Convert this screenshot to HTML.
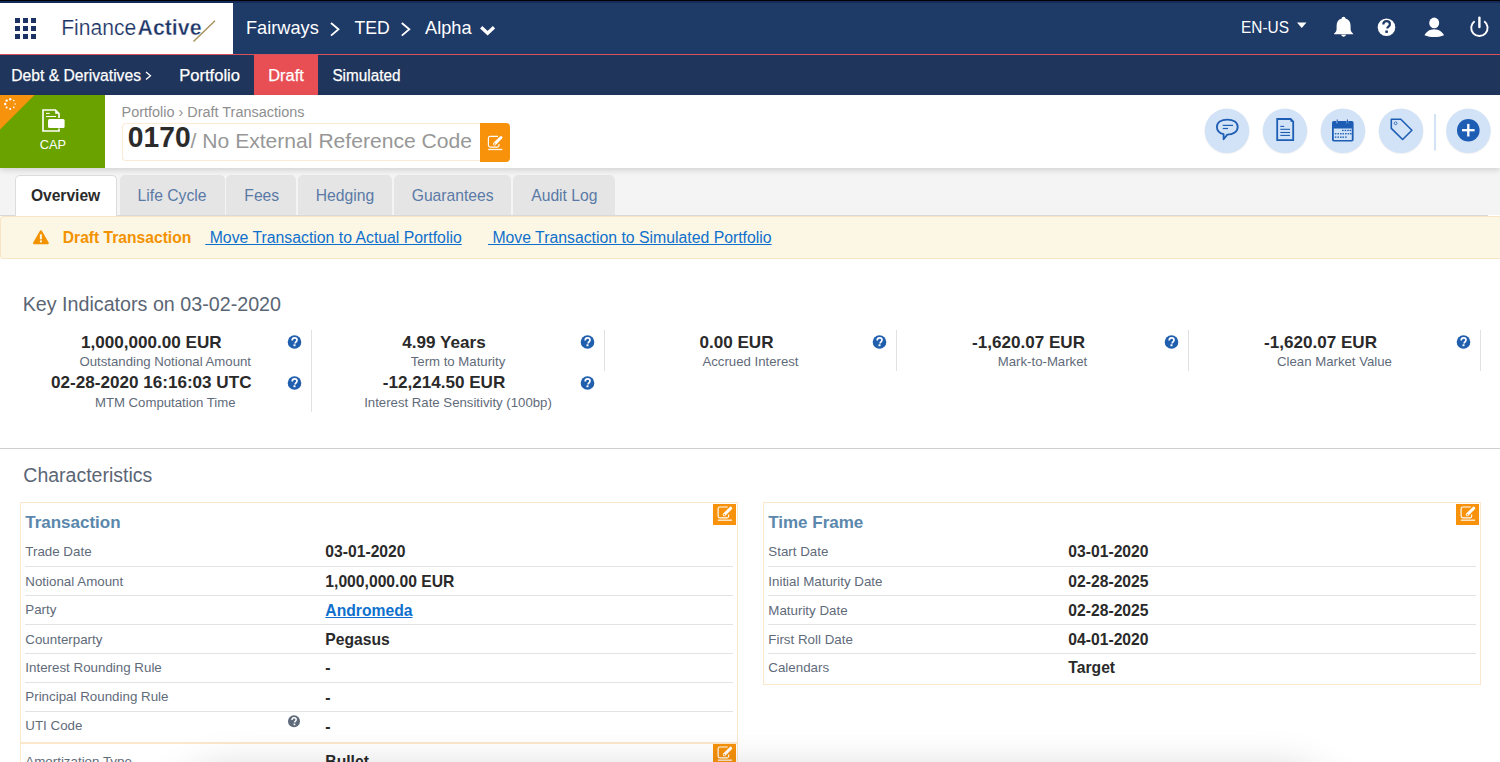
<!DOCTYPE html>
<html><head><meta charset="utf-8">
<style>
html,body{margin:0;padding:0;}
body{width:1500px;height:762px;overflow:hidden;position:relative;background:#fff;font-family:"Liberation Sans",sans-serif;}
.a{position:absolute;}
.t{position:absolute;white-space:nowrap;line-height:1;}
.b{font-weight:bold;}
svg{position:absolute;overflow:visible;}
</style></head>
<body>

<div class="a" style="left:0px;top:0px;width:1500px;height:1px;background:#000;"></div>
<div class="a" style="left:0px;top:1px;width:1500px;height:2px;background:#132a5a;"></div>
<div class="a" style="left:0px;top:3px;width:233px;height:51px;background:#fff;"></div>
<div class="a" style="left:233px;top:3px;width:1267px;height:51px;background:#1e3a67;"></div>
<div class="a" style="left:0px;top:54px;width:1500px;height:1px;background:#d9515a;"></div>
<svg style="left:0;top:0" width="1" height="1"><g fill="#1b3263"><rect x="15" y="18" width="5" height="5"/><rect x="23" y="18" width="5" height="5"/><rect x="31" y="18" width="5" height="5"/><rect x="15" y="26" width="5" height="5"/><rect x="23" y="26" width="5" height="5"/><rect x="31" y="26" width="5" height="5"/><rect x="15" y="34" width="5" height="5"/><rect x="23" y="34" width="5" height="5"/><rect x="31" y="34" width="5" height="5"/></g></svg>
<svg style="left:0;top:0" width="1" height="1"><text x="61.2" y="34.7" font-family="Liberation Sans" font-size="21.6" fill="#1d3566" stroke="#fff" stroke-width="0.2" textLength="75" lengthAdjust="spacingAndGlyphs">Finance</text><text x="137.5" y="34.7" font-family="Liberation Sans" font-weight="bold" font-size="21.6" fill="#1d3566" stroke="#fff" stroke-width="0.35" textLength="64" lengthAdjust="spacingAndGlyphs">Active</text><line x1="193.5" y1="41.5" x2="215" y2="20.8" stroke="#a8925e" stroke-width="1.5"/></svg>
<div class="t" style="left:246.00px;top:19.49px;font-size:18.2px;color:#fff;">Fairways</div>
<div class="t" style="left:354.60px;top:20.00px;font-size:17.6px;color:#fff;">TED</div>
<div class="t" style="left:425.00px;top:19.49px;font-size:18.2px;color:#fff;">Alpha</div>
<svg style="left:0;top:0" width="1" height="1"><polyline points="331,23 338.5,29.3 331,35.6" fill="none" stroke="#fff" stroke-width="1.8"/><polyline points="401.8,23 409.3,29.3 401.8,35.6" fill="none" stroke="#fff" stroke-width="1.8"/><polyline points="481.2,27.3 487.6,33.3 494,27.3" fill="none" stroke="#fff" stroke-width="3.3"/></svg>
<svg style="left:0;top:0" width="1" height="1"><text x="1241" y="32.6" font-family="Liberation Sans" font-size="16.6" fill="#fff" textLength="48" lengthAdjust="spacingAndGlyphs">EN-US</text></svg>
<svg style="left:0;top:0" width="1" height="1"><polygon points="1297,22.5 1306.5,22.5 1301.75,28" fill="#fff"/><path d="M1343.6,16.8 c-1.2,0 -1.8,0.9 -1.9,1.6 c-3.4,0.9 -5.1,3.6 -5.1,7.3 l0,3.6 c0,1.8 -1.2,3.3 -2.6,4.4 l0,0.6 l19.2,0 l0,-0.6 c-1.4,-1.1 -2.6,-2.6 -2.6,-4.4 l0,-3.6 c0,-3.7 -1.7,-6.4 -5.1,-7.3 c-0.1,-0.7 -0.7,-1.6 -1.9,-1.6 z M1341.2,34.8 c0.2,1.1 1.2,1.9 2.4,1.9 c1.2,0 2.2,-0.8 2.4,-1.9 z" fill="#fff"/><circle cx="1386.5" cy="27.3" r="8.8" fill="#fff"/><path d="M1383.3,24.6 c0,-2 1.5,-3.4 3.3,-3.4 c1.9,0 3.3,1.3 3.3,3 c0,2.4 -2.6,2.5 -2.6,4.4" fill="none" stroke="#1e3a67" stroke-width="2.2"/><rect x="1385.3" y="30.5" width="2.6" height="2.4" fill="#1e3a67"/><ellipse cx="1434.2" cy="22.9" rx="5" ry="5.3" fill="#fff"/><path d="M1424.5,35.2 c1.5,-3 5,-5.9 9.7,-5.9 c4.7,0 8.2,2.9 9.8,5.9 c-3,1.3 -6.5,1.8 -9.8,1.8 c-3.3,0 -6.7,-0.5 -9.7,-1.8 z" fill="#fff"/><path d="M1474.6,21.2 A8.2,8.2 0 1 0 1484.2,21.2" fill="none" stroke="#fff" stroke-width="1.9"/><line x1="1479.4" y1="17.6" x2="1479.4" y2="27" stroke="#fff" stroke-width="2.4" stroke-linecap="round"/></svg>
<div class="a" style="left:0px;top:55px;width:1500px;height:40px;background:#1f355c;"></div>
<div class="a" style="left:254px;top:55px;width:64px;height:40px;background:#e84f55;"></div>
<svg style="left:0;top:0" width="1" height="1"><text x="11.3" y="81" font-family="Liberation Sans" font-weight="normal" font-size="16.8" fill="#fff" stroke="#fff" stroke-width="0.25" textLength="129.7" lengthAdjust="spacingAndGlyphs">Debt &amp; Derivatives</text></svg>
<svg style="left:0;top:0" width="1" height="1"><polyline points="146,72 150.5,75.8 146,79.6" fill="none" stroke="#fff" stroke-width="1.3"/></svg>
<svg style="left:0;top:0" width="1" height="1"><text x="179.2" y="81" font-family="Liberation Sans" font-weight="normal" font-size="16.8" fill="#fff" stroke="#fff" stroke-width="0.25" textLength="60.8" lengthAdjust="spacingAndGlyphs">Portfolio</text></svg>
<svg style="left:0;top:0" width="1" height="1"><text x="268.3" y="81" font-family="Liberation Sans" font-weight="normal" font-size="16.8" fill="#fff" stroke="#fff" stroke-width="0.25" textLength="35.5" lengthAdjust="spacingAndGlyphs">Draft</text></svg>
<svg style="left:0;top:0" width="1" height="1"><text x="332.4" y="81" font-family="Liberation Sans" font-weight="normal" font-size="16.8" fill="#fff" stroke="#fff" stroke-width="0.25" textLength="68" lengthAdjust="spacingAndGlyphs">Simulated</text></svg>
<div class="a" style="left:0px;top:95px;width:1500px;height:73px;background:#fff;box-shadow:0 2px 6px rgba(0,0,0,0.15);z-index:2;"></div>
<div class="a" style="left:0px;top:95px;width:105px;height:73px;background:#6aa300;z-index:3;"></div>
<svg style="left:0;top:0;z-index:4" width="1" height="1"><polygon points="0,95 34.5,95 0,129.5" fill="#f7920c"/><g fill="#fff"><circle cx="10.2" cy="99.2" r="1.2"/><circle cx="13.8" cy="100.6" r="0.8"/><circle cx="15.1" cy="104.0" r="0.7"/><circle cx="13.8" cy="107.4" r="0.8"/><circle cx="10.2" cy="109.0" r="1"/><circle cx="6.6" cy="107.4" r="1"/><circle cx="5.2" cy="104.0" r="1.2"/><circle cx="6.6" cy="100.6" r="1.2"/></g><path d="M59,118 L59,113.6 L55.4,110 L43,110 L43,131 L59,131 L59,128.5" fill="none" stroke="#fff" stroke-width="1.6"/><path d="M55.2,110 L59,113.8 L55.2,113.8 Z" fill="#fff"/><line x1="46" y1="113.4" x2="49.7" y2="113.4" stroke="#fff" stroke-width="1.1"/><line x1="46" y1="116.5" x2="56" y2="116.5" stroke="#fff" stroke-width="1.1"/><rect x="48" y="118.9" width="16.6" height="9.2" rx="1.5" fill="#fff"/></svg>
<div class="t" style="left:39.80px;top:138.76px;font-size:12.8px;color:#fff;z-index:4;">CAP</div>
<div class="t" style="left:121.50px;top:105.17px;font-size:14.45px;color:#8f8f8f;z-index:4;">Portfolio › Draft Transactions</div>
<div class="a" style="left:121.5px;top:123px;width:357px;height:36px;border:1px solid #fcebd3;border-right:none;border-radius:4px 0 0 4px;background:#fff;z-index:4;"></div>
<div class="a" style="left:480px;top:123px;width:30px;height:39px;background:#f7920a;border-radius:0 4px 4px 0;z-index:4;"></div>
<svg style="left:0;top:0;z-index:5" width="1" height="1"><path d="M498.00,136.30 L490.20,136.30 Q488.40,136.30 488.40,138.10 L488.40,145.30 Q488.40,147.10 490.20,147.10 L497.20,147.10 Q499.00,147.10 499.00,145.30 L499.00,143.90" fill="none" stroke="#fff" stroke-width="1.15"/><line x1="494.60" y1="143.90" x2="501.00" y2="137.50" stroke="#fff" stroke-width="3" stroke-linecap="round"/><circle cx="494.70" cy="144.00" r="0.8" fill="#f7920a"/><line x1="488.10" y1="149.50" x2="502.40" y2="149.50" stroke="#fff" stroke-width="1.3" opacity="0.9"/></svg>
<svg style="left:0;top:0;z-index:5" width="1" height="1"><text x="127.8" y="147.4" font-family="Liberation Sans" font-weight="bold" font-size="30" fill="#2b2b2b" textLength="62.8" lengthAdjust="spacingAndGlyphs">0170</text></svg>
<div class="t" style="left:190.60px;top:129.74px;font-size:21.1px;color:#979797;z-index:5;">/ No External Reference Code</div>
<svg style="left:0;top:0;z-index:5" width="1" height="1"><circle cx="1227" cy="131.6" r="22.6" fill="rgba(0,0,0,0.05)"/><circle cx="1285" cy="131.6" r="22.6" fill="rgba(0,0,0,0.05)"/><circle cx="1343" cy="131.6" r="22.6" fill="rgba(0,0,0,0.05)"/><circle cx="1401" cy="131.6" r="22.6" fill="rgba(0,0,0,0.05)"/><circle cx="1468.4" cy="131.6" r="22.6" fill="rgba(0,0,0,0.05)"/><g fill="#d3e3f7"><circle cx="1227" cy="130.8" r="22.3"/><circle cx="1285" cy="130.8" r="22.3"/><circle cx="1343" cy="130.8" r="22.3"/><circle cx="1401" cy="130.8" r="22.3"/><circle cx="1468.4" cy="130.8" r="22.3"/></g><rect x="1434" y="114" width="2" height="36.6" fill="#d3e3f7"/><g stroke="#1d5eb4" fill="none"><path d="M1223.6,134.2 C1218.5,133 1216.9,130 1216.9,127 C1216.9,122.3 1221.3,119.6 1227.3,119.6 C1233.3,119.6 1237.7,122.3 1237.7,127 C1237.7,131.5 1233.3,134.6 1227.3,134.6 L1223.6,139.2 Z" stroke-width="1.8" stroke-linejoin="round"/><line x1="1222.7" y1="125.4" x2="1233" y2="125.4" stroke-width="1.2"/><line x1="1222.7" y1="128.5" x2="1228" y2="128.5" stroke-width="1.2"/><path d="M1277.2,119 L1290.6,119 L1293.2,121.6 L1293.2,140.1 L1277.2,140.1 Z" stroke-width="1.8"/><line x1="1280.3" y1="126.4" x2="1284.2" y2="126.4" stroke-width="1.1"/><line x1="1280.3" y1="129.3" x2="1290" y2="129.3" stroke-width="1.1"/><line x1="1280.3" y1="132.5" x2="1290" y2="132.5" stroke-width="1.1"/><line x1="1280.3" y1="135.4" x2="1290" y2="135.4" stroke-width="1.1"/><path d="M1391.3,119.3 L1400.8,119.3 L1411.9,130.2 L1402.6,139.5 L1391.3,128.4 Z" stroke-width="1.6" stroke-linejoin="round"/><circle cx="1395.6" cy="123.3" r="1.4" stroke-width="0.8"/></g><g fill="#1d5eb4"><path d="M1290.5,118.3 L1294,121.8 L1290.5,121.8 Z"/><path d="M1333.8,121 L1351.8,121 Q1353.6,121 1353.6,122.8 L1353.6,139.8 Q1353.6,141.6 1351.8,141.6 L1333.8,141.6 Q1332,141.6 1332,139.8 L1332,122.8 Q1332,121 1333.8,121 Z M1333.8,128.6 L1333.8,139.6 Q1333.8,139.9 1334.1,139.9 L1351.5,139.9 Q1351.8,139.9 1351.8,139.6 L1351.8,128.6 Z" fill-rule="evenodd"/><rect x="1342" y="129.8" width="1.6" height="1.3"/><rect x="1344.6" y="129.8" width="1.6" height="1.3"/><rect x="1347.2" y="129.8" width="1.6" height="1.3"/><rect x="1349.6" y="129.8" width="1.6" height="1.3"/><rect x="1334.8" y="133.1" width="1.6" height="1.3"/><rect x="1337.4" y="133.1" width="1.6" height="1.3"/><rect x="1340" y="133.1" width="1.6" height="1.3"/><rect x="1342.4" y="133.1" width="1.6" height="1.3"/><rect x="1345" y="133.1" width="1.6" height="1.3"/><rect x="1347.6" y="133.1" width="1.6" height="1.3"/><rect x="1350" y="133.1" width="1.6" height="1.3"/><rect x="1334.8" y="136.5" width="1.6" height="1.3"/><rect x="1337.4" y="136.5" width="1.6" height="1.3"/><rect x="1340" y="136.5" width="1.6" height="1.3"/><rect x="1342.4" y="136.5" width="1.6" height="1.3"/><rect x="1345" y="136.5" width="1.6" height="1.3"/><circle cx="1468.3" cy="130.2" r="11.3"/></g><g stroke="#d3e3f7" stroke-width="1.6"><line x1="1337.2" y1="119.8" x2="1337.2" y2="123.6"/><line x1="1347.4" y1="119.8" x2="1347.4" y2="123.6"/></g><g stroke="#1d5eb4" stroke-width="1.1"><line x1="1337.2" y1="119.6" x2="1337.2" y2="124"/><line x1="1347.4" y1="119.6" x2="1347.4" y2="124"/></g><g stroke="#fff" stroke-width="2.3"><line x1="1462" y1="130.2" x2="1474.6" y2="130.2"/><line x1="1468.3" y1="123.9" x2="1468.3" y2="136.5"/></g></svg>
<div class="a" style="left:0px;top:168px;width:1500px;height:47px;background:#f4f4f5;"></div>
<div class="a" style="left:0px;top:215px;width:1488px;height:1px;background:#d9d9dc;"></div>
<div class="a" style="left:14.5px;top:175px;width:100.8px;height:41px;background:#fff;border:1px solid #dcdcdf;border-bottom:none;border-radius:5px 5px 0 0;"></div>
<div class="t b" style="left:30.90px;top:187.79px;font-size:15.6px;color:#2b2b2b;">Overview</div>
<div class="a" style="left:120.0px;top:175px;width:104.5px;height:40px;background:#e5e5e6;border-radius:5px 5px 0 0;"></div>
<div class="t" style="left:137.60px;top:187.71px;font-size:15.7px;color:#5a7aa5;">Life Cycle</div>
<div class="a" style="left:226.1px;top:175px;width:70.3px;height:40px;background:#e5e5e6;border-radius:5px 5px 0 0;"></div>
<div class="t" style="left:244.30px;top:187.71px;font-size:15.7px;color:#5a7aa5;">Fees</div>
<div class="a" style="left:298.2px;top:175px;width:94.3px;height:40px;background:#e5e5e6;border-radius:5px 5px 0 0;"></div>
<div class="t" style="left:315.70px;top:187.71px;font-size:15.7px;color:#5a7aa5;">Hedging</div>
<div class="a" style="left:394.2px;top:175px;width:116.7px;height:40px;background:#e5e5e6;border-radius:5px 5px 0 0;"></div>
<div class="t" style="left:411.70px;top:187.71px;font-size:15.7px;color:#5a7aa5;">Guarantees</div>
<div class="a" style="left:513.1px;top:175px;width:101.8px;height:40px;background:#e5e5e6;border-radius:5px 5px 0 0;"></div>
<div class="t" style="left:531.20px;top:187.71px;font-size:15.7px;color:#5a7aa5;">Audit Log</div>
<div class="a" style="left:0px;top:216px;width:1520px;height:41px;background:#fcf6e4;border:1px solid #f7e6c6;border-radius:3px;"></div>
<svg style="left:0;top:0" width="1" height="1"><path d="M40.9,230.3 Q41.6,230.3 42,231 L48.6,242.6 Q49,243.5 48.2,244.3 L33.6,244.3 Q32.8,243.5 33.2,242.6 L39.8,231 Q40.2,230.3 40.9,230.3 Z" fill="#f39200"/><rect x="39.9" y="234.3" width="2" height="5" fill="#fcf6e4"/><rect x="39.9" y="240.4" width="2" height="2" fill="#fcf6e4"/></svg>
<div class="t b" style="left:62.80px;top:229.86px;font-size:15.64px;color:#f39200;">Draft Transaction</div>
<div class="t" style="left:205.30px;top:230.23px;font-size:15.8px;color:#0e70cc;text-decoration:underline;">&nbsp;Move Transaction to Actual Portfolio</div>
<div class="t" style="left:488.00px;top:230.23px;font-size:15.8px;color:#0e70cc;text-decoration:underline;">&nbsp;Move Transaction to Simulated Portfolio</div>
<div class="t" style="left:22.70px;top:294.62px;font-size:19.7px;color:#5b6675;">Key Indicators on 03-02-2020</div>
<div class="t b" style="left:19.50px;top:333.82px;font-size:17.1px;color:#2a2a2a;width:263.5px;text-align:center;">1,000,000.00 EUR</div>
<div class="t" style="left:19.00px;top:354.53px;font-size:13.2px;color:#5f6b7a;width:292.5px;text-align:center;">Outstanding Notional Amount</div>
<svg style="left:0;top:0" width="1" height="1"><circle cx="294.5" cy="342" r="6.8" fill="#1f5fae"/><path d="M292.2,340.4 c0,-1.5 1,-2.5 2.4,-2.5 c1.4,0 2.4,0.9 2.4,2.2 c0,1.7 -1.9,1.8 -1.9,3.3" fill="none" stroke="#fff" stroke-width="1.7"/><rect x="293.5" y="344.3" width="2" height="1.9" fill="#fff"/></svg>
<div class="t b" style="left:312.00px;top:333.82px;font-size:17.1px;color:#2a2a2a;width:264.0px;text-align:center;">4.99 Years</div>
<div class="t" style="left:311.50px;top:354.53px;font-size:13.2px;color:#5f6b7a;width:293.0px;text-align:center;">Term to Maturity</div>
<svg style="left:0;top:0" width="1" height="1"><circle cx="587.5" cy="342" r="6.8" fill="#1f5fae"/><path d="M585.2,340.4 c0,-1.5 1,-2.5 2.4,-2.5 c1.4,0 2.4,0.9 2.4,2.2 c0,1.7 -1.9,1.8 -1.9,3.3" fill="none" stroke="#fff" stroke-width="1.7"/><rect x="586.5" y="344.3" width="2" height="1.9" fill="#fff"/></svg>
<div class="t b" style="left:605.00px;top:333.82px;font-size:17.1px;color:#2a2a2a;width:263.0px;text-align:center;">0.00 EUR</div>
<div class="t" style="left:604.50px;top:354.53px;font-size:13.2px;color:#5f6b7a;width:292.0px;text-align:center;">Accrued Interest</div>
<svg style="left:0;top:0" width="1" height="1"><circle cx="879.5" cy="342" r="6.8" fill="#1f5fae"/><path d="M877.2,340.4 c0,-1.5 1,-2.5 2.4,-2.5 c1.4,0 2.4,0.9 2.4,2.2 c0,1.7 -1.9,1.8 -1.9,3.3" fill="none" stroke="#fff" stroke-width="1.7"/><rect x="878.5" y="344.3" width="2" height="1.9" fill="#fff"/></svg>
<div class="t b" style="left:897.00px;top:333.82px;font-size:17.1px;color:#2a2a2a;width:263.0px;text-align:center;">-1,620.07 EUR</div>
<div class="t" style="left:896.50px;top:354.53px;font-size:13.2px;color:#5f6b7a;width:292.0px;text-align:center;">Mark-to-Market</div>
<svg style="left:0;top:0" width="1" height="1"><circle cx="1171.5" cy="342" r="6.8" fill="#1f5fae"/><path d="M1169.2,340.4 c0,-1.5 1,-2.5 2.4,-2.5 c1.4,0 2.4,0.9 2.4,2.2 c0,1.7 -1.9,1.8 -1.9,3.3" fill="none" stroke="#fff" stroke-width="1.7"/><rect x="1170.5" y="344.3" width="2" height="1.9" fill="#fff"/></svg>
<div class="t b" style="left:1189.00px;top:333.82px;font-size:17.1px;color:#2a2a2a;width:263.0px;text-align:center;">-1,620.07 EUR</div>
<div class="t" style="left:1188.50px;top:354.53px;font-size:13.2px;color:#5f6b7a;width:292.0px;text-align:center;">Clean Market Value</div>
<svg style="left:0;top:0" width="1" height="1"><circle cx="1463.5" cy="342" r="6.8" fill="#1f5fae"/><path d="M1461.2,340.4 c0,-1.5 1,-2.5 2.4,-2.5 c1.4,0 2.4,0.9 2.4,2.2 c0,1.7 -1.9,1.8 -1.9,3.3" fill="none" stroke="#fff" stroke-width="1.7"/><rect x="1462.5" y="344.3" width="2" height="1.9" fill="#fff"/></svg>
<div class="t b" style="left:19.50px;top:373.92px;font-size:17.1px;color:#2a2a2a;width:263.5px;text-align:center;">02-28-2020 16:16:03 UTC</div>
<div class="t" style="left:19.00px;top:395.93px;font-size:13.2px;color:#5f6b7a;width:292.5px;text-align:center;">MTM Computation Time</div>
<svg style="left:0;top:0" width="1" height="1"><circle cx="294.5" cy="383" r="6.8" fill="#1f5fae"/><path d="M292.2,381.4 c0,-1.5 1,-2.5 2.4,-2.5 c1.4,0 2.4,0.9 2.4,2.2 c0,1.7 -1.9,1.8 -1.9,3.3" fill="none" stroke="#fff" stroke-width="1.7"/><rect x="293.5" y="385.3" width="2" height="1.9" fill="#fff"/></svg>
<div class="t b" style="left:312.00px;top:373.92px;font-size:17.1px;color:#2a2a2a;width:264.0px;text-align:center;">-12,214.50 EUR</div>
<div class="t" style="left:311.50px;top:395.93px;font-size:13.2px;color:#5f6b7a;width:293.0px;text-align:center;">Interest Rate Sensitivity (100bp)</div>
<svg style="left:0;top:0" width="1" height="1"><circle cx="587.5" cy="383" r="6.8" fill="#1f5fae"/><path d="M585.2,381.4 c0,-1.5 1,-2.5 2.4,-2.5 c1.4,0 2.4,0.9 2.4,2.2 c0,1.7 -1.9,1.8 -1.9,3.3" fill="none" stroke="#fff" stroke-width="1.7"/><rect x="586.5" y="385.3" width="2" height="1.9" fill="#fff"/></svg>
<div class="a" style="left:311px;top:330px;width:1px;height:82px;background:#e2e2e2;"></div>
<div class="a" style="left:604px;top:330px;width:1px;height:41px;background:#e2e2e2;"></div>
<div class="a" style="left:896px;top:330px;width:1px;height:41px;background:#e2e2e2;"></div>
<div class="a" style="left:1188px;top:330px;width:1px;height:41px;background:#e2e2e2;"></div>
<div class="a" style="left:1480px;top:330px;width:1px;height:41px;background:#e2e2e2;"></div>
<div class="a" style="left:0px;top:448px;width:1500px;height:1px;background:#cfcfd2;"></div>
<div class="t" style="left:23.30px;top:466.19px;font-size:19.5px;color:#5b6675;">Characteristics</div>
<div class="a" style="left:20px;top:502px;width:716px;height:239px;border:1px solid #fbe8cc;"></div>
<div class="t b" style="left:25.20px;top:513.91px;font-size:17px;color:#5a87ab;">Transaction</div>
<div class="a" style="left:713px;top:504px;width:23px;height:21px;background:#f7920a;"></div>
<svg style="left:0;top:0" width="1" height="1"><path d="M727.70,507.00 L719.90,507.00 Q718.10,507.00 718.10,508.80 L718.10,516.00 Q718.10,517.80 719.90,517.80 L726.90,517.80 Q728.70,517.80 728.70,516.00 L728.70,514.60" fill="none" stroke="#fff" stroke-width="1.15"/><line x1="724.30" y1="514.60" x2="730.70" y2="508.20" stroke="#fff" stroke-width="3" stroke-linecap="round"/><circle cx="724.40" cy="514.70" r="0.8" fill="#f7920a"/><line x1="717.80" y1="520.20" x2="732.10" y2="520.20" stroke="#fff" stroke-width="1.3" opacity="0.9"/></svg>
<div class="a" style="left:25px;top:566px;width:707.5px;height:1px;background:#e3e3e3;"></div>
<div class="a" style="left:25px;top:595px;width:707.5px;height:1px;background:#e3e3e3;"></div>
<div class="a" style="left:25px;top:624px;width:707.5px;height:1px;background:#e3e3e3;"></div>
<div class="a" style="left:25px;top:653px;width:707.5px;height:1px;background:#e3e3e3;"></div>
<div class="a" style="left:25px;top:682px;width:707.5px;height:1px;background:#e3e3e3;"></div>
<div class="a" style="left:25px;top:711px;width:707.5px;height:1px;background:#e3e3e3;"></div>
<div class="t" style="left:25.30px;top:545.10px;font-size:13.35px;color:#5f6b7a;">Trade Date</div>
<div class="t b" style="left:325.30px;top:544.31px;font-size:15.7px;color:#2a2a2a;">03-01-2020</div>
<div class="t" style="left:25.30px;top:574.70px;font-size:13.35px;color:#5f6b7a;">Notional Amount</div>
<div class="t b" style="left:325.30px;top:573.91px;font-size:15.7px;color:#2a2a2a;">1,000,000.00 EUR</div>
<div class="t" style="left:25.30px;top:603.30px;font-size:13.35px;color:#5f6b7a;">Party</div>
<div class="t b" style="left:325.30px;top:602.61px;font-size:15.7px;color:#0e70cc;text-decoration:underline;">Andromeda</div>
<div class="t" style="left:25.30px;top:633.00px;font-size:13.35px;color:#5f6b7a;">Counterparty</div>
<div class="t b" style="left:325.30px;top:632.21px;font-size:15.7px;color:#2a2a2a;">Pegasus</div>
<div class="t" style="left:25.30px;top:661.00px;font-size:13.35px;color:#5f6b7a;">Interest Rounding Rule</div>
<div class="t b" style="left:325.30px;top:660.21px;font-size:15.7px;color:#2a2a2a;">-</div>
<div class="t" style="left:25.30px;top:690.40px;font-size:13.35px;color:#5f6b7a;">Principal Rounding Rule</div>
<div class="t b" style="left:325.30px;top:689.61px;font-size:15.7px;color:#2a2a2a;">-</div>
<div class="t" style="left:25.30px;top:719.30px;font-size:13.35px;color:#5f6b7a;">UTI Code</div>
<div class="t b" style="left:325.30px;top:718.51px;font-size:15.7px;color:#2a2a2a;">-</div>
<svg style="left:0;top:0" width="1" height="1"><circle cx="294" cy="721.3" r="6" fill="#5f6b7a"/><path d="M292,720 c0,-1.3 0.9,-2.2 2.1,-2.2 c1.2,0 2.1,0.8 2.1,1.9 c0,1.5 -1.7,1.6 -1.7,2.9" fill="none" stroke="#fff" stroke-width="1.5"/><rect x="293.6" y="723.6" width="1.7" height="1.6" fill="#fff"/></svg>
<div class="a" style="left:763px;top:502px;width:716px;height:181px;border:1px solid #fbe8cc;"></div>
<div class="t b" style="left:768.20px;top:513.91px;font-size:17px;color:#5a87ab;">Time Frame</div>
<div class="a" style="left:1456px;top:504px;width:23px;height:21px;background:#f7920a;"></div>
<svg style="left:0;top:0" width="1" height="1"><path d="M1470.70,507.00 L1462.90,507.00 Q1461.10,507.00 1461.10,508.80 L1461.10,516.00 Q1461.10,517.80 1462.90,517.80 L1469.90,517.80 Q1471.70,517.80 1471.70,516.00 L1471.70,514.60" fill="none" stroke="#fff" stroke-width="1.15"/><line x1="1467.30" y1="514.60" x2="1473.70" y2="508.20" stroke="#fff" stroke-width="3" stroke-linecap="round"/><circle cx="1467.40" cy="514.70" r="0.8" fill="#f7920a"/><line x1="1460.80" y1="520.20" x2="1475.10" y2="520.20" stroke="#fff" stroke-width="1.3" opacity="0.9"/></svg>
<div class="a" style="left:768px;top:566px;width:707.5px;height:1px;background:#e3e3e3;"></div>
<div class="a" style="left:768px;top:595px;width:707.5px;height:1px;background:#e3e3e3;"></div>
<div class="a" style="left:768px;top:624px;width:707.5px;height:1px;background:#e3e3e3;"></div>
<div class="a" style="left:768px;top:653px;width:707.5px;height:1px;background:#e3e3e3;"></div>
<div class="t" style="left:768.30px;top:545.20px;font-size:13.35px;color:#5f6b7a;">Start Date</div>
<div class="t b" style="left:1068.30px;top:544.41px;font-size:15.7px;color:#2a2a2a;">03-01-2020</div>
<div class="t" style="left:768.30px;top:574.70px;font-size:13.35px;color:#5f6b7a;">Initial Maturity Date</div>
<div class="t b" style="left:1068.30px;top:573.91px;font-size:15.7px;color:#2a2a2a;">02-28-2025</div>
<div class="t" style="left:768.30px;top:603.70px;font-size:13.35px;color:#5f6b7a;">Maturity Date</div>
<div class="t b" style="left:1068.30px;top:602.91px;font-size:15.7px;color:#2a2a2a;">02-28-2025</div>
<div class="t" style="left:768.30px;top:633.00px;font-size:13.35px;color:#5f6b7a;">First Roll Date</div>
<div class="t b" style="left:1068.30px;top:632.21px;font-size:15.7px;color:#2a2a2a;">04-01-2020</div>
<div class="t" style="left:768.30px;top:661.00px;font-size:13.35px;color:#5f6b7a;">Calendars</div>
<div class="t b" style="left:1068.30px;top:660.21px;font-size:15.7px;color:#2a2a2a;">Target</div>
<div class="a" style="left:20px;top:743px;width:716px;height:40px;border:1px solid #fbe8cc;"></div>
<div class="t" style="left:25.30px;top:755.30px;font-size:13.35px;color:#5f6b7a;">Amortization Type</div>
<div class="t b" style="left:325.30px;top:753.71px;font-size:15.7px;color:#2a2a2a;">Bullet</div>
<div class="a" style="left:713px;top:744px;width:23px;height:21px;background:#f7920a;"></div>
<svg style="left:0;top:0" width="1" height="1"><path d="M727.70,747.00 L719.90,747.00 Q718.10,747.00 718.10,748.80 L718.10,756.00 Q718.10,757.80 719.90,757.80 L726.90,757.80 Q728.70,757.80 728.70,756.00 L728.70,754.60" fill="none" stroke="#fff" stroke-width="1.15"/><line x1="724.30" y1="754.60" x2="730.70" y2="748.20" stroke="#fff" stroke-width="3" stroke-linecap="round"/><circle cx="724.40" cy="754.70" r="0.8" fill="#f7920a"/><line x1="717.80" y1="760.20" x2="732.10" y2="760.20" stroke="#fff" stroke-width="1.3" opacity="0.9"/></svg>
<div class="a" style="left:165px;top:774px;width:1180px;height:200px;border-radius:70px;box-shadow:0 0 40px 6px rgba(0,0,0,0.16);background:#fff;"></div>
</body></html>
